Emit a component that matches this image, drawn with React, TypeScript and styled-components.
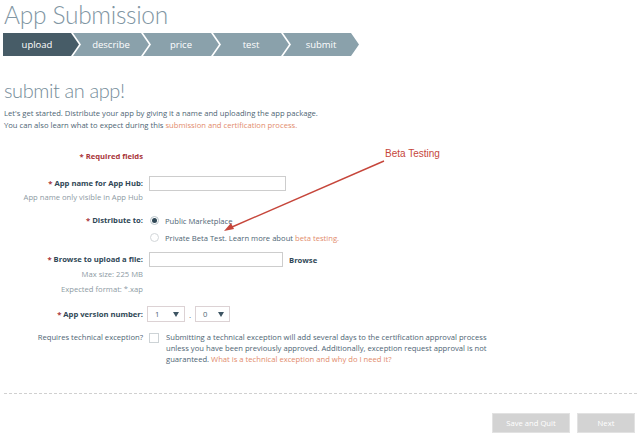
import React from "react";
import styled, { createGlobalStyle } from "styled-components";

const Global = createGlobalStyle`
  html, body { margin: 0; padding: 0; background: #fff; }
  body { font-family: "Open Sans", "Noto Sans", sans-serif; }
  * { box-sizing: border-box; }
`;

const Page = styled.div`
  position: relative;
  width: 640px;
  height: 437px;
  padding: 0 3px 0 4px;
`;

const Title = styled.h1`
  margin: 0;
  font-family: "Lato", "Open Sans", sans-serif;
  font-weight: 300;
  font-size: 24.5px;
  line-height: 29.5px;
  color: #8196a3;
  letter-spacing: -0.3px;
`;

const Steps = styled.div`
  display: flex;
  margin: 3.5px 0 0 -1px;
  height: 23px;
`;

const Step = styled.div<{ $active?: boolean; $first?: boolean }>`
  width: 76px;
  height: 23px;
  margin-left: ${(p) => (p.$first ? "0" : "-6px")};
  padding: ${(p) => (p.$first ? "0 8px 0 0" : "0 8px 0 8px")};
  background: ${(p) => (p.$active ? "#475c67" : "#8aa1ab")};
  color: #fff;
  font-size: 9.5px;
  display: flex;
  align-items: center;
  justify-content: center;
  clip-path: ${(p) =>
    p.$first
      ? "polygon(0 0, calc(100% - 8px) 0, 100% 50%, calc(100% - 8px) 100%, 0 100%)"
      : "polygon(0 0, calc(100% - 8px) 0, 100% 50%, calc(100% - 8px) 100%, 0 100%, 8px 50%)"};
`;

const Heading = styled.h2`
  margin: 22px 0 0;
  font-family: "Lato", "Open Sans", sans-serif;
  font-weight: 300;
  font-size: 20px;
  line-height: 24px;
  color: #768d9a;
  letter-spacing: -0.4px;
`;

const Intro = styled.p`
  margin: 5px 0 0;
  font-size: 7.65px;
  line-height: 12px;
  color: #4e6574;
`;

const Link = styled.span`
  color: #e28b6c;
`;

const Form = styled.div`
  display: flex;
  flex-direction: column;
  margin-top: 19px;
`;

const Row = styled.div<{ $mt: number }>`
  display: grid;
  grid-template-columns: 139px 1fr;
  column-gap: 6px;
  align-items: start;
  margin-top: ${(p) => p.$mt}px;
`;

const LabelCol = styled.div`
  display: flex;
  flex-direction: column;
  align-items: flex-end;
  text-align: right;
`;

const Label = styled.div<{ $lh: number; $weight?: number; $color?: string }>`
  font-size: 7.65px;
  line-height: ${(p) => p.$lh}px;
  font-weight: ${(p) => p.$weight ?? 700};
  color: ${(p) => p.$color ?? "#2f4756"};
  white-space: nowrap;
`;

const Star = styled.span`
  color: #a8353a;
`;

const Helper = styled.div<{ $lh: number }>`
  font-size: 7.65px;
  line-height: ${(p) => p.$lh}px;
  color: #8d9aa3;
  white-space: nowrap;
`;

const FieldLine = styled.div<{ $shift?: number }>`
  display: flex;
  align-items: center;
  gap: 6px;
  margin-left: ${(p) => p.$shift ?? 0}px;
`;

const TextBox = styled.div<{ $w: number }>`
  width: ${(p) => p.$w}px;
  height: 15px;
  border: 1px solid #cdcdcd;
  background: #fff;
`;

const BrowseText = styled.span`
  font-size: 7.65px;
  font-weight: 700;
  color: #2f4756;
`;

const Options = styled.div`
  display: flex;
  flex-direction: column;
`;

const Option = styled.div`
  display: flex;
  align-items: center;
  height: 17px;
  font-size: 7.65px;
  color: #4e6574;
  gap: 6px;
  white-space: nowrap;
`;

const Radio = styled.span<{ $checked?: boolean }>`
  width: 9px;
  height: 9px;
  border-radius: 50%;
  border: 1px solid ${(p) => (p.$checked ? "#b8c4ca" : "#d2d6d9")};
  display: flex;
  align-items: center;
  justify-content: center;
  margin-left: 1px;
  &::after {
    content: "";
    width: 5px;
    height: 5px;
    border-radius: 50%;
    background: ${(p) => (p.$checked ? "#2f4756" : "transparent")};
  }
`;

const Select = styled.div<{ $w: number }>`
  width: ${(p) => p.$w}px;
  height: 16px;
  border: 1px solid #dcd2d4;
  display: flex;
  align-items: center;
  justify-content: space-between;
  padding: 0 5px 0 7px;
  font-size: 7.65px;
  color: #4e6574;
`;

const Dot = styled.span`
  font-size: 8px;
  color: #4e6574;
  margin: 0 -2px;
`;

const Check = styled.span`
  width: 10px;
  height: 10px;
  border: 1px solid #cdd3d6;
  margin-top: 0.5px;
  flex: none;
`;

const ExcText = styled.div`
  font-size: 7.65px;
  line-height: 11px;
  color: #4e6574;
  white-space: nowrap;
`;

const ExcLine = styled.div`
  display: flex;
  gap: 7px;
  align-items: flex-start;
`;

const Divider = styled.div`
  margin-top: 28px;
  border-top: 1px dashed #d0d0d0;
`;

const Footer = styled.div`
  display: flex;
  justify-content: flex-end;
  gap: 7px;
  margin-top: 19px;
  padding-right: 2px;
`;

const Button = styled.div<{ $w: number }>`
  width: ${(p) => p.$w}px;
  height: 20px;
  background: #d3d3d3;
  border: 1px solid #e2e2e2;
  color: #fff;
  font-size: 7.65px;
  display: flex;
  align-items: center;
  justify-content: center;
`;

const Annotation = styled.div`
  position: absolute;
  left: 385px;
  top: 147px;
  font-family: "Liberation Sans", Arial, sans-serif;
  font-size: 10px;
  line-height: 13px;
  color: #c6463b;
`;

const ArrowSvg = styled.svg`
  position: absolute;
  left: 0;
  top: 0;
  pointer-events: none;
`;

const Caret = () => (
  <svg width="6" height="5" viewBox="0 0 6 5">
    <path d="M0 0 H6 L3 5 Z" fill="#3d5563" />
  </svg>
);

export default function App() {
  const steps = ["upload", "describe", "price", "test", "submit"];
  return (
    <Page>
      <Global />
      <Title>App Submission</Title>
      <Steps>
        {steps.map((s, i) => (
          <Step key={s} $first={i === 0} $active={i === 0}>
            {s}
          </Step>
        ))}
      </Steps>
      <Heading>submit an app!</Heading>
      <Intro>
        Let's get started. Distribute your app by giving it a name and uploading the app package.
        <br />
        You can also learn what to expect during this <Link>submission and certification process.</Link>
      </Intro>
      <Form>
        <Row $mt={0}>
          <LabelCol>
            <Label $lh={12} $color="#a8353a">* Required fields</Label>
          </LabelCol>
          <div />
        </Row>
        <Row $mt={14}>
          <LabelCol>
            <Label $lh={15}><Star>*</Star> App name for App Hub:</Label>
            <Helper $lh={12}>App name only visible in App Hub</Helper>
          </LabelCol>
          <FieldLine>
            <TextBox $w={137} />
          </FieldLine>
        </Row>
        <Row $mt={9}>
          <LabelCol>
            <Label $lh={17}><Star>*</Star> Distribute to:</Label>
          </LabelCol>
          <Options>
            <Option>
              <Radio $checked />
              Public Marketplace
            </Option>
            <Option>
              <Radio />
              <span>
                Private Beta Test. Learn more about <Link>beta testing.</Link>
              </span>
            </Option>
          </Options>
        </Row>
        <Row $mt={6}>
          <LabelCol>
            <Label $lh={15}><Star>*</Star> Browse to upload a file:</Label>
            <Helper $lh={15}>Max size: 225 MB</Helper>
            <Helper $lh={15}>Expected format: *.xap</Helper>
          </LabelCol>
          <FieldLine>
            <TextBox $w={134} />
            <BrowseText>Browse</BrowseText>
          </FieldLine>
        </Row>
        <Row $mt={9}>
          <LabelCol>
            <Label $lh={16}><Star>*</Star> App version number:</Label>
          </LabelCol>
          <FieldLine $shift={-2}>
            <Select $w={38}>
              <span>1</span>
              <Caret />
            </Select>
            <Dot>.</Dot>
            <Select $w={35}>
              <span>0</span>
              <Caret />
            </Select>
          </FieldLine>
        </Row>
        <Row $mt={10}>
          <LabelCol>
            <Label $lh={11} $weight={400} $color="#4e6574">Requires technical exception?</Label>
          </LabelCol>
          <ExcLine>
            <Check />
            <ExcText>
              Submitting a technical exception will add several days to the certification approval process
              <br />
              unless you have been previously approved. Additionally, exception request approval is not
              <br />
              guaranteed. <Link>What is a technical exception and why do I need it?</Link>
            </ExcText>
          </ExcLine>
        </Row>
      </Form>
      <Divider />
      <Footer>
        <Button $w={78}>Save and Quit</Button>
        <Button $w={58}>Next</Button>
      </Footer>
      <Annotation>Beta Testing</Annotation>
      <ArrowSvg width="640" height="437" viewBox="0 0 640 437">
        <line x1="384" y1="161" x2="232" y2="227" stroke="#c6463b" strokeWidth="1.4" />
        <path d="M224 231 L231 223 L234 229 Z" fill="#c6463b" />
      </ArrowSvg>
    </Page>
  );
}
